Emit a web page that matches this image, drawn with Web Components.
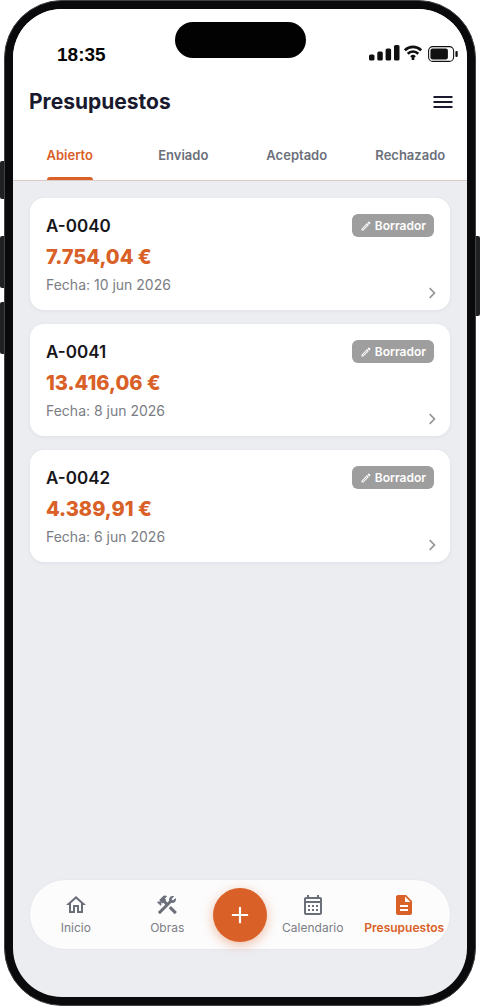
<!DOCTYPE html>
<html lang="es">
<head>
<meta charset="utf-8">
<meta name="viewport" content="width=device-width, initial-scale=1">
<title>Presupuestos</title>
<style>
  body {
    margin: 0;
    background: #fff;
    font-family: Inter, "Liberation Sans", sans-serif;
    --accent: #d96027;
    --muted: #6b6f7a;
    --surface: #ecedf1;
  }
</style>
</head>
<body>
<phone-frame>
  <status-bar time="18:35"></status-bar>
  <app-header>Presupuestos</app-header>
  <tab-bar>
    <tab-item selected>Abierto</tab-item>
    <tab-item>Enviado</tab-item>
    <tab-item>Aceptado</tab-item>
    <tab-item>Rechazado</tab-item>
  </tab-bar>
  <budget-list>
    <budget-card number="A-0040" date="10 jun 2026" status="Borrador">7.754,04 €</budget-card>
    <budget-card number="A-0041" date="8 jun 2026" status="Borrador">13.416,06 €</budget-card>
    <budget-card number="A-0042" date="6 jun 2026" status="Borrador">4.389,91 €</budget-card>
  </budget-list>
  <bottom-nav>
    <nav-item icon="home">Inicio</nav-item>
    <nav-item icon="tools">Obras</nav-item>
    <add-button></add-button>
    <nav-item icon="calendar">Calendario</nav-item>
    <nav-item icon="document" selected>Presupuestos</nav-item>
  </bottom-nav>
</phone-frame>

<script>
const ICONS = {
  home: '<path d="M12 5.69l5 4.5V18h-2v-6H9v6H7v-7.81l5-4.5M12 3L2 12h3v8h6v-6h2v6h6v-8h3L12 3z"/>',
  tools: '<path d="M13.783 15.172l2.121-2.121 5.996 5.996-2.121 2.121z"/><path d="M17.5 10c1.93 0 3.5-1.57 3.5-3.5 0-.58-.16-1.12-.41-1.6l-2.7 2.7-1.49-1.49 2.7-2.7c-.48-.25-1.02-.41-1.6-.41C15.57 3 14 4.57 14 6.5c0 .41.08.8.21 1.16l-1.85 1.85-1.78-1.78.71-.71-1.41-1.41L12 3.49c-1.17-1.17-3.07-1.17-4.24 0L4.22 7.03l1.41 1.41H2.81l-.71.71 3.54 3.54.71-.71V9.15l1.41 1.41.71-.71 1.78 1.78-7.41 7.41 2.12 2.12L16.34 9.79c.36.13.75.21 1.16.21z"/>',
  calendar: '<path d="M19 4h-1V2h-2v2H8V2H6v2H5c-1.11 0-1.99.9-1.99 2L3 20c0 1.1.89 2 2 2h14c1.1 0 2-.9 2-2V6c0-1.1-.9-2-2-2zm0 16H5V10h14v10zm0-12H5V6h14v2zM9 14H7v-2h2v2zm4 0h-2v-2h2v2zm4 0h-2v-2h2v2zm-8 4H7v-2h2v2zm4 0h-2v-2h2v2zm4 0h-2v-2h2v2z"/>',
  document: '<path d="M14 2H6c-1.1 0-1.99.9-1.99 2L4 20c0 1.1.89 2 1.99 2H18c1.1 0 2-.9 2-2V8l-6-6zm2 16H8v-2h8v2zm0-4H8v-2h8v2zm-3-5V3.5L18.5 9H13z"/>',
  menu: '<path d="M2.500 18h19v-2h-19v2zm0-5h19v-2h-19v2zm0-7v2h19V6h-19z"/>',
  plus: '<path d="M19.500 13H13v6.500h-2V13H4.500v-2H11V4.500h2V11h6.500v2z"/>',
  pencil: '<path d="M14.06 9.02l.92.92L5.92 19H5v-.92l9.06-9.06M17.66 3c-.25 0-.51.1-.7.29l-1.83 1.83 3.75 3.75 1.83-1.83c.39-.39.39-1.02 0-1.41l-2.34-2.34c-.2-.2-.45-.29-.71-.29zm-3.6 3.19L3 17.25V21h3.75L17.81 9.94l-3.75-3.75z"/>',
  chevron: '<path d="M10 5.500L8.500 7 13.500 12l-5 5L10 18.500l6.500-6.500z"/>'
};
const icon = (name, size) =>
  `<svg viewBox="0 0 24 24" width="${size}" height="${size}" fill="currentColor" aria-hidden="true">${ICONS[name]}</svg>`;

class Base extends HTMLElement {
  connectedCallback() {
    if (this.shadowRoot) return;
    this.attachShadow({ mode: 'open' }).innerHTML =
      `<style>:host,*{box-sizing:border-box} svg{display:block;flex:none}</style>` + this.view();
  }
}

customElements.define('phone-frame', class extends Base {
  view() {
    return `<style>
      :host { display: flex; min-height: 100vh; }
      .rail { flex: none; width: 4px; display: flex; flex-direction: column; gap: 14px; padding-top: 236px; }
      .left { padding-top: 161px; }
      .key { height: 52px; background: #1f2123; border-radius: 2px 0 0 2px; }
      .mute { height: 38px; margin-bottom: 23px; }
      .power { height: 80px; border-radius: 0 2px 2px 0; }
      .body { flex: 1; min-width: 0; display: flex; border: 1px solid #414244; border-radius: 58px; background: #0a0a0c; padding: 8px; }
      .screen { flex: 1; min-width: 0; display: flex; flex-direction: column; background: var(--surface); border-radius: 49px; overflow: hidden; }
    </style>
    <div class="rail left"><div class="key mute"></div><div class="key"></div><div class="key"></div></div>
    <div class="body"><div class="screen"><slot></slot></div></div>
    <div class="rail"><div class="key power"></div></div>`;
  }
});

customElements.define('status-bar', class extends Base {
  view() {
    return `<style>
      :host { display: grid; grid-template-columns: 1fr 131px 1fr; background: #fff; height: 66px; padding: 13px 9px 0; }
      .time { font: 700 19px/24px "Liberation Sans", sans-serif; color: #050505; margin-top: 21px; padding-left: 35px; }
      .island { height: 36px; border-radius: 18px; background: #020203; }
      .icons { display: flex; justify-content: flex-end; align-items: center; gap: 4px; height: 20px; margin-top: 21px; color: #111; }
      .battery { margin: 2px 0 0 2px; }
    </style>
    <span class="time">${this.getAttribute('time')}</span>
    <span class="island"></span>
    <span class="icons">
      <svg width="31" height="16" viewBox="0 0 31 16" fill="currentColor"><rect x="0" y="9.500" width="5.500" height="6" rx="1.500"/><rect x="8.300" y="6.500" width="5.500" height="9" rx="1.500"/><rect x="16.600" y="3.500" width="5.500" height="12" rx="1.500"/><rect x="25" y="0" width="5.500" height="15.500" rx="1.500"/></svg>
      <svg width="18" height="16" viewBox="0 0 18 16" fill="none" stroke="currentColor"><path d="M.8 5.300a11.700 11.700 0 0 1 16.400 0" stroke-width="2.800"/><path d="M3.700 8.700a7.600 7.600 0 0 1 10.600 0" stroke-width="2.600"/><path d="M6.200 11.200a4 4 0 0 1 5.600 0L10.300 12.800V15H7.700V12.800z" fill="currentColor" stroke="none"/></svg>
      <svg class="battery" width="30" height="16" viewBox="0 0 30 16"><rect x=".6" y=".6" width="25" height="14.800" rx="4.200" fill="none" stroke="#111" stroke-width="1.100"/><rect x="2.400" y="2.600" width="17.500" height="10.800" rx="2.200" fill="#111"/><rect x="27.400" y="5" width="2.300" height="6" rx="1" fill="#111"/></svg>
    </span>`;
  }
});

customElements.define('app-header', class extends Base {
  view() {
    return `<style>
      :host { display: flex; align-items: center; justify-content: space-between; height: 54px; padding: 0 12px 0 16px; background: #fff; color: #1a1a2e; }
      h1 { margin: 0; font-size: 21px; line-height: 28px; font-weight: 700; }
      button { border: 0; padding: 0; background: none; color: inherit; }
    </style>
    <h1><slot></slot></h1>
    <button type="button" aria-label="Menú">${icon('menu', 24)}</button>`;
  }
});

customElements.define('tab-bar', class extends Base {
  view() {
    return `<style>
      :host { display: flex; background: #fff; border-bottom: 1px solid #dcc9c8; height: 52px; }
    </style><slot></slot>`;
  }
  connectedCallback() { super.connectedCallback(); this.setAttribute('role', 'tablist'); }
});

customElements.define('tab-item', class extends Base {
  view() {
    const on = this.hasAttribute('selected');
    return `<style>
      :host { flex: 1; display: flex; justify-content: center; }
      button { display: flex; flex-direction: column; align-items: center; justify-content: space-between; padding: 17px 0 0; border: 0; background: none; font: 600 13px/18px Inter, sans-serif; color: var(--muted); }
      button::after { content: ""; width: 100%; height: 3px; border-radius: 3px 3px 0 0; }
      button[aria-selected=true] { color: var(--accent); }
      button[aria-selected=true]::after { background: var(--accent); }
    </style><button type="button" role="tab" aria-selected="${on}"><slot></slot></button>`;
  }
});

customElements.define('budget-list', class extends Base {
  view() {
    return `<style>
      :host { flex: 1; display: flex; flex-direction: column; gap: 14px; padding: 17px; }
    </style><slot></slot>`;
  }
});

customElements.define('budget-card', class extends Base {
  view() {
    const a = n => this.getAttribute(n);
    return `<style>
      :host { display: block; }
      a { display: grid; grid-template-columns: 1fr auto; padding: 16px 16px 15px; border-radius: 14px; background: #fff; box-shadow: 0 1px 4px rgba(30, 35, 60, .06); text-decoration: none; color: #16161a; }
      .main { display: flex; flex-direction: column; }
      .number { font-size: 17px; line-height: 24px; font-weight: 600; }
      .amount { font-size: 20px; line-height: 24px; font-weight: 800; color: var(--accent); margin: 7px 0 6px; }
      .date { font-size: 14px; line-height: 20px; color: #7b7d84; }
      .side { display: flex; flex-direction: column; justify-content: space-between; align-items: flex-end; }
      .badge { display: flex; align-items: center; gap: 3px; height: 23px; padding: 0 8px; border-radius: 6px; background: #9e9e9e; color: #fff; font-size: 12px; font-weight: 600; }
      .go { color: #9a9a9e; margin: 0 -8px -8px 0; }
    </style>
    <a href="#${a('number')}">
      <span class="main">
        <span class="number">${a('number')}</span>
        <span class="amount"><slot></slot></span>
        <span class="date">Fecha: ${a('date')}</span>
      </span>
      <span class="side">
        <span class="badge">${icon('pencil', 12)}<span>${a('status')}</span></span>
        <span class="go">${icon('chevron', 20)}</span>
      </span>
    </a>`;
  }
});

customElements.define('bottom-nav', class extends Base {
  view() {
    return `<style>
      :host { display: block; padding: 0 17px 48px; }
      nav { display: flex; align-items: center; height: 69px; border-radius: 35px; background: #fcfcfc; box-shadow: 0 0 2px rgba(30, 35, 60, .08); }
    </style><nav aria-label="Principal"><slot></slot></nav>`;
  }
});

customElements.define('nav-item', class extends Base {
  view() {
    const on = this.hasAttribute('selected');
    return `<style>
      :host { flex: 1 1 0; min-width: 0; }
      a { display: flex; flex-direction: column; align-items: center; gap: 3px; text-decoration: none; white-space: nowrap; font-size: 12px; line-height: 16px; color: #7b7d84; }
      svg { color: var(--muted); }
      a[aria-current], a[aria-current] svg { color: var(--accent); }
      a[aria-current] { font-weight: 600; }
    </style><a href="#${this.getAttribute('icon')}"${on ? ' aria-current="page"' : ''}>${icon(this.getAttribute('icon'), 24)}<span><slot></slot></span></a>`;
  }
});

customElements.define('add-button', class extends Base {
  view() {
    return `<style>
      :host { flex: none; }
      button { display: grid; place-items: center; width: 54px; height: 54px; padding: 0; border: 0; border-radius: 50%; background: var(--accent); color: #fff; box-shadow: 0 3px 12px rgba(217, 96, 39, .4); }
    </style><button type="button" aria-label="Añadir">${icon('plus', 26)}</button>`;
  }
});
</script>
</body>
</html>
